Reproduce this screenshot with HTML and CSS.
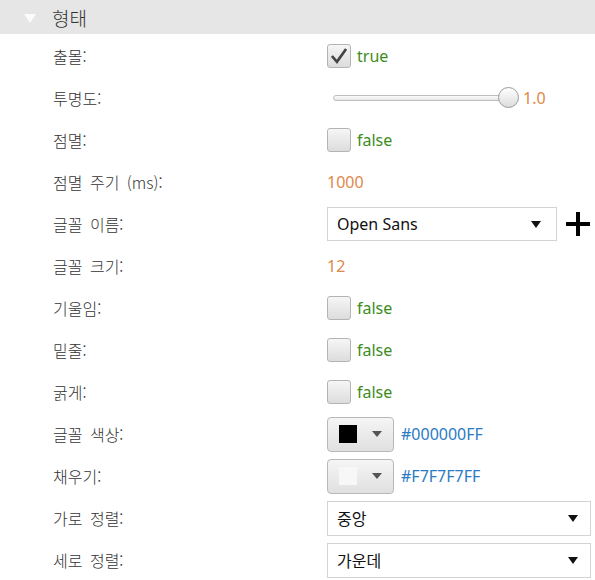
FILE: index.html
```html
<!DOCTYPE html>
<html lang="ko">
<head>
<meta charset="utf-8">
<link rel="stylesheet" href="styles.css">
</head>
<body>
<div class="panel">
  <div class="header">
    <span class="caret"></span>
    <span class="title">형태</span>
  </div>
  <div class="rows">
    <div class="row"><span class="label">출몰:</span>
      <div class="value"><span class="check on"><svg viewBox="0 0 24 24" width="24" height="24"><path d="M3.5 12 L9.5 19 L20.5 3.5" fill="none" stroke="#444" stroke-width="3.2"/></svg></span><span class="bool">true</span></div></div>
    <div class="row"><span class="label">투명도:</span>
      <div class="value"><div class="slider"><span class="track"></span><span class="thumb"></span></div><span class="num">1.0</span></div></div>
    <div class="row"><span class="label">점멸:</span>
      <div class="value"><span class="check"></span><span class="bool">false</span></div></div>
    <div class="row"><span class="label">점멸 주기 (ms):</span>
      <div class="value"><span class="num">1000</span></div></div>
    <div class="row"><span class="label">글꼴 이름:</span>
      <div class="value"><div class="combo combo-font"><span>Open Sans</span><span class="arrow"></span></div>
        <svg class="plus" viewBox="0 0 26 26" width="26" height="26"><path d="M13 1 V25 M1 13 H25" stroke="#000" stroke-width="4"/></svg></div></div>
    <div class="row"><span class="label">글꼴 크기:</span>
      <div class="value"><span class="num">12</span></div></div>
    <div class="row"><span class="label">기울임:</span>
      <div class="value"><span class="check"></span><span class="bool">false</span></div></div>
    <div class="row"><span class="label">밑줄:</span>
      <div class="value"><span class="check"></span><span class="bool">false</span></div></div>
    <div class="row"><span class="label">굵게:</span>
      <div class="value"><span class="check"></span><span class="bool">false</span></div></div>
    <div class="row"><span class="label">글꼴 색상:</span>
      <div class="value"><div class="colorbtn"><span class="swatch black"></span><span class="carrow"></span></div><span class="hex">#000000FF</span></div></div>
    <div class="row"><span class="label">채우기:</span>
      <div class="value"><div class="colorbtn"><span class="swatch light"></span><span class="carrow"></span></div><span class="hex">#F7F7F7FF</span></div></div>
    <div class="row"><span class="label">가로 정렬:</span>
      <div class="value"><div class="combo combo-wide"><span>중앙</span><span class="arrow"></span></div></div></div>
    <div class="row"><span class="label">세로 정렬:</span>
      <div class="value"><div class="combo combo-wide"><span>가운데</span><span class="arrow"></span></div></div></div>
  </div>
</div>
</body>
</html>
```
FILE: styles.css
```css
html, body {
  margin: 0;
  padding: 0;
  background: #fff;
}
body {
  width: 595px;
  height: 580px;
  overflow: hidden;
  font-family: "Noto Sans", "Noto Sans CJK KR", sans-serif;
  font-size: 16px;
  color: #333;
}
.header {
  height: 34px;
  background: #e6e6e6;
  display: flex;
  align-items: center;
  padding-left: 24px;
  margin-bottom: 1px;
}
.caret {
  width: 0;
  height: 0;
  border-left: 6px solid transparent;
  border-right: 6px solid transparent;
  border-top: 9px solid #fbfbfb;
  margin-top: 2px;
}
.title {
  margin-left: 16px;
  font-size: 19px;
  font-weight: 300;
  color: #333;
  font-family: "Noto Sans CJK KR", sans-serif;
}
.rows {
  display: flex;
  flex-direction: column;
}
.row {
  height: 42px;
  display: grid;
  grid-template-columns: 274px 1fr;
  align-items: center;
  padding-left: 53px;
}
.label {
  font-family: "Noto Sans CJK KR", sans-serif;
  font-weight: 300;
  color: #333;
  font-size: 16px;
  word-spacing: 3px;
}
.value {
  display: flex;
  align-items: center;
  height: 42px;
}
.check {
  width: 24px;
  height: 24px;
  box-sizing: border-box;
  border: 1px solid #b4b4b4;
  border-radius: 3px;
  background: linear-gradient(#f6f6f6, #dcdcdc);
  display: inline-flex;
  align-items: center;
  justify-content: center;
  margin-right: 6px;
}
.check svg {
  width: 20px;
  height: 20px;
}
.bool {
  color: #3d8c1c;
  font-size: 16px;
}
.num {
  color: #e0884a;
  font-size: 16px;
}
.slider {
  position: relative;
  width: 190px;
  height: 22px;
  margin-left: 6px;
  display: flex;
  align-items: center;
}
.track {
  width: 172px;
  height: 6px;
  box-sizing: border-box;
  border: 1px solid #bdbdbd;
  border-radius: 3px;
  background: linear-gradient(#fafafa, #e8e8e8);
}
.thumb {
  position: absolute;
  left: 165px;
  top: 0;
  width: 21px;
  height: 21px;
  box-sizing: border-box;
  border: 1px solid #9a9a9a;
  border-radius: 50%;
  background: linear-gradient(#ffffff, #dcdcdc);
}
.combo {
  box-sizing: border-box;
  border: 1px solid #d3d3d3;
  background: #fff;
  display: flex;
  align-items: center;
  justify-content: space-between;
  padding-left: 9px;
  color: #111;
  font-size: 16px;
}
.combo-font {
  width: 230px;
  height: 34px;
  padding-right: 15px;
}
.combo-wide {
  width: 264px;
  height: 35px;
  padding-right: 12px;
  font-family: "Noto Sans CJK KR", sans-serif;
}
.arrow {
  width: 0;
  height: 0;
  border-left: 5px solid transparent;
  border-right: 5px solid transparent;
  border-top: 7px solid #111;
}
.plus {
  margin-left: 8px;
}
.colorbtn {
  width: 67px;
  height: 35px;
  box-sizing: border-box;
  border: 1px solid #b8b8b8;
  border-radius: 4px;
  background: linear-gradient(#f5f5f5, #e0e0e0);
  display: flex;
  align-items: center;
  padding-left: 11px;
  margin-right: 7px;
}
.swatch {
  width: 18px;
  height: 18px;
}
.swatch.black { background: #000; }
.swatch.light { background: #f7f7f7; }
.carrow {
  margin-left: 15px;
  width: 0;
  height: 0;
  border-left: 5px solid transparent;
  border-right: 5px solid transparent;
  border-top: 6px solid #555;
}
.hex {
  color: #2b7bc4;
  font-size: 16px;
}
```
